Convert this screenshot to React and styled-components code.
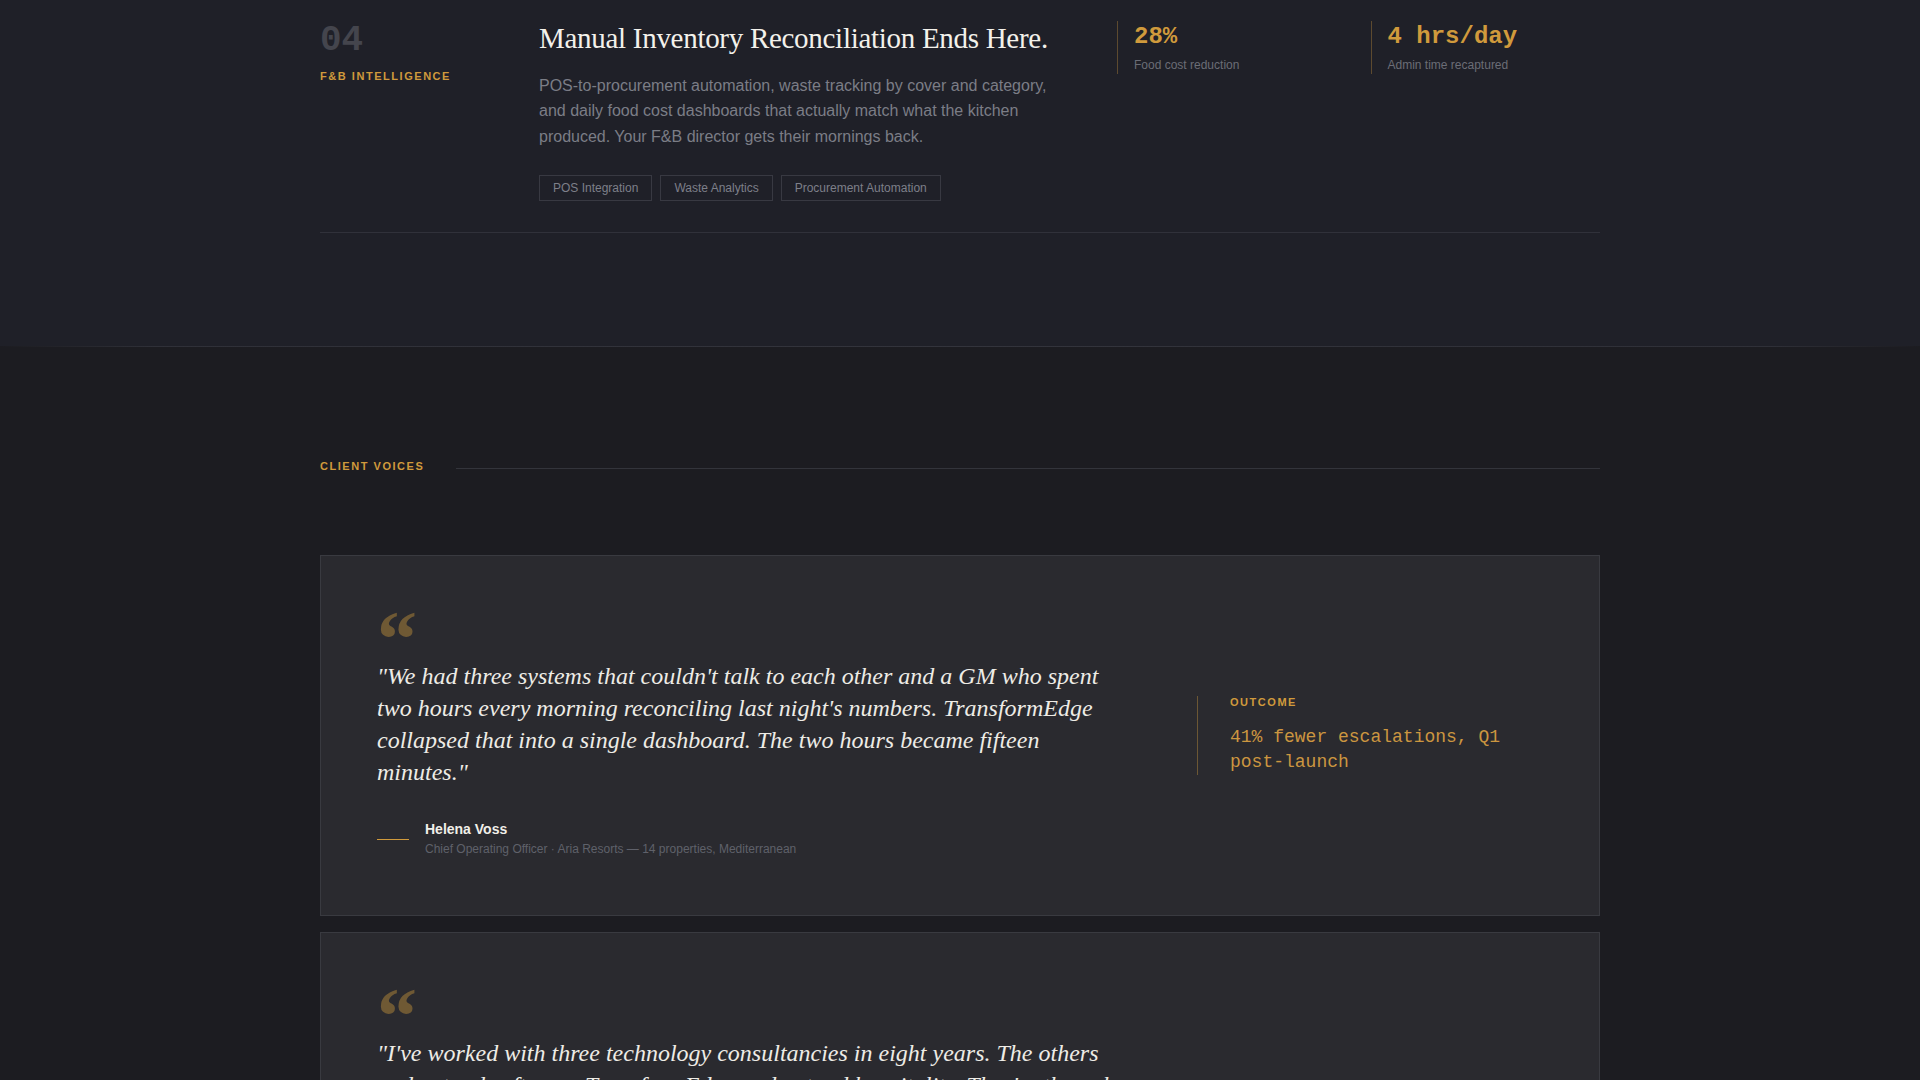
import React from "react";
import styled, { createGlobalStyle } from "styled-components";

const GlobalStyle = createGlobalStyle`
  html, body {
    margin: 0;
    padding: 0;
    background: #1c1c21;
  }
  body {
    font-family: "Liberation Sans", Arial, sans-serif;
    color: #e9e7e1;
  }
  * {
    box-sizing: border-box;
  }
`;

const amber = "#d09a3c";

const Page = styled.div`
  min-height: 100vh;
  background: #1c1c21;
`;

const ServicesSection = styled.section`
  background: #1f2028;
  padding-bottom: 113px;
`;

const Container = styled.div`
  width: 1280px;
  margin: 0 auto;
`;

const ServiceRow = styled.div`
  display: grid;
  grid-template-columns: 179px 1fr 483px;
  column-gap: 40px;
  padding: 21px 0 31px;
  border-bottom: 1px solid #30313a;
`;

const IndexCol = styled.div`
  display: flex;
  flex-direction: column;
`;

const Index = styled.div`
  margin-top: 2px;
  font-family: "Liberation Mono", monospace;
  font-weight: 700;
  font-size: 36px;
  line-height: 1;
  color: #44454d;
`;

const Eyebrow = styled.div`
  margin-top: ${({ $mt }) => $mt || 0}px;
  font-family: "Liberation Sans", Arial, sans-serif;
  font-weight: 700;
  font-size: 11px;
  line-height: 1.4;
  letter-spacing: 0.14em;
  text-transform: uppercase;
  color: ${amber};
  white-space: nowrap;
`;

const Body = styled.div`
  display: flex;
  flex-direction: column;
`;

const Title = styled.h3`
  margin: 0;
  font-family: "Liberation Serif", "Times New Roman", serif;
  font-weight: 400;
  font-size: 29px;
  line-height: 1.2;
  letter-spacing: -0.01em;
  color: #f3f1eb;
`;

const Desc = styled.p`
  margin: 17px 0 0;
  max-width: 520px;
  font-size: 16px;
  line-height: 1.6;
  color: #7b7d86;
`;

const Tags = styled.div`
  display: flex;
  gap: 8px;
  margin-top: 25px;
`;

const Tag = styled.span`
  padding: 5px 13px;
  border: 1px solid #383942;
  font-size: 12px;
  line-height: 14px;
  color: #7d7f89;
`;

const Metrics = styled.div`
  display: grid;
  grid-template-columns: 1fr 1fr;
  column-gap: 24px;
  align-self: start;
`;

const Metric = styled.div`
  border-left: 1px solid rgba(208, 154, 60, 0.35);
  padding: 2px 0 0 16px;
`;

const MetricValue = styled.div`
  font-family: "Liberation Mono", monospace;
  font-weight: 700;
  font-size: 24px;
  line-height: 1.2;
  color: ${amber};
`;

const MetricLabel = styled.div`
  margin-top: 5px;
  font-size: 12px;
  line-height: 1.4;
  color: #6b6d76;
`;

const Divider = styled.div`
  height: 1px;
  background: linear-gradient(
    90deg,
    transparent 0%,
    #2f3038 8%,
    #33343c 50%,
    #2f3038 92%,
    transparent 100%
  );
`;

const VoicesSection = styled.section`
  padding: 112px 0 80px;
`;

const SectionHead = styled.div`
  display: flex;
  align-items: center;
  gap: 32px;
`;

const Rule = styled.div`
  flex: 1;
  height: 1px;
  margin-top: 4px;
  background: #33343b;
`;

const CardList = styled.div`
  display: flex;
  flex-direction: column;
  gap: 16px;
  margin-top: 81px;
`;

const Card = styled.article`
  display: grid;
  grid-template-columns: 1fr 346px;
  column-gap: 64px;
  align-items: center;
  padding: 56px;
  background: #2a2a2f;
  border: 1px solid #393a40;
`;

const QuoteCol = styled.div`
  display: flex;
  flex-direction: column;
`;

const QuoteMark = styled.div`
  height: 48px;
  font-family: "Liberation Serif", "Times New Roman", serif;
  font-weight: 700;
  font-size: 80px;
  line-height: 54px;
  color: rgba(208, 154, 60, 0.42);
  user-select: none;
`;

const QuoteText = styled.blockquote`
  margin: 0;
  font-family: "Liberation Serif", "Times New Roman", serif;
  font-style: italic;
  font-size: 24px;
  line-height: 32px;
  color: #eeece6;
`;

const Author = styled.div`
  display: flex;
  align-items: center;
  gap: 16px;
  margin-top: 32px;
`;

const Dash = styled.span`
  width: 32px;
  height: 1px;
  background: ${amber};
  flex: none;
`;

const AuthorName = styled.div`
  font-weight: 700;
  font-size: 14px;
  line-height: 1.4;
  color: #f1efe9;
`;

const AuthorRole = styled.div`
  font-size: 12px;
  line-height: 1.6;
  color: #5f616a;
`;

const Outcome = styled.div`
  border-left: 1px solid rgba(208, 154, 60, 0.4);
  padding-left: 32px;
`;

const OutcomeLabel = styled.div`
  font-weight: 700;
  font-size: 11px;
  line-height: 1.2;
  letter-spacing: 0.14em;
  color: ${amber};
`;

const OutcomeValue = styled.div`
  margin-top: 16px;
  font-family: "Liberation Mono", monospace;
  font-size: 18px;
  line-height: 25px;
  color: #cc9640;
`;

const metrics = [
  { value: "28%", label: "Food cost reduction" },
  { value: "4 hrs/day", label: "Admin time recaptured" },
];

const tags = ["POS Integration", "Waste Analytics", "Procurement Automation"];

const testimonials = [
  {
    quote:
      "\"We had three systems that couldn't talk to each other and a GM who spent two hours every morning reconciling last night's numbers. TransformEdge collapsed that into a single dashboard. The two hours became fifteen minutes.\"",
    name: "Helena Voss",
    role: "Chief Operating Officer · Aria Resorts — 14 properties, Mediterranean",
    outcome: "41% fewer escalations, Q1 post-launch",
  },
  {
    quote:
      "\"I've worked with three technology consultancies in eight years. The others understood software. TransformEdge understood hospitality. They're the only team that sat through a Saturday night service before writing a single line of code, and it shows in everything they shipped. Our front desk, our kitchens and our revenue team finally work from the same numbers.\"",
    name: "Marcus Adeyemi",
    role: "General Manager · The Harrow Collection — 6 boutique hotels, London",
    outcome: "RevPAR up 12% within two quarters",
  },
];

export default function App() {
  return (
    <Page>
      <GlobalStyle />
      <ServicesSection>
        <Container>
          <ServiceRow>
            <IndexCol>
              <Index>04</Index>
              <Eyebrow $mt={10}>F&amp;B Intelligence</Eyebrow>
            </IndexCol>
            <Body>
              <Title>Manual Inventory Reconciliation Ends Here.</Title>
              <Desc>
                POS-to-procurement automation, waste tracking by cover and
                category, and daily food cost dashboards that actually match what
                the kitchen produced. Your F&amp;B director gets their mornings
                back.
              </Desc>
              <Tags>
                {tags.map((t) => (
                  <Tag key={t}>{t}</Tag>
                ))}
              </Tags>
            </Body>
            <Metrics>
              {metrics.map((m) => (
                <Metric key={m.label}>
                  <MetricValue>{m.value}</MetricValue>
                  <MetricLabel>{m.label}</MetricLabel>
                </Metric>
              ))}
            </Metrics>
          </ServiceRow>
        </Container>
      </ServicesSection>
      <Divider />
      <VoicesSection>
        <Container>
          <SectionHead>
            <Eyebrow>Client Voices</Eyebrow>
            <Rule />
          </SectionHead>
          <CardList>
            {testimonials.map((t) => (
              <Card key={t.name}>
                <QuoteCol>
                  <QuoteMark aria-hidden="true">&ldquo;</QuoteMark>
                  <QuoteText>{t.quote}</QuoteText>
                  <Author>
                    <Dash />
                    <div>
                      <AuthorName>{t.name}</AuthorName>
                      <AuthorRole>{t.role}</AuthorRole>
                    </div>
                  </Author>
                </QuoteCol>
                <Outcome>
                  <OutcomeLabel>OUTCOME</OutcomeLabel>
                  <OutcomeValue>{t.outcome}</OutcomeValue>
                </Outcome>
              </Card>
            ))}
          </CardList>
        </Container>
      </VoicesSection>
    </Page>
  );
}
